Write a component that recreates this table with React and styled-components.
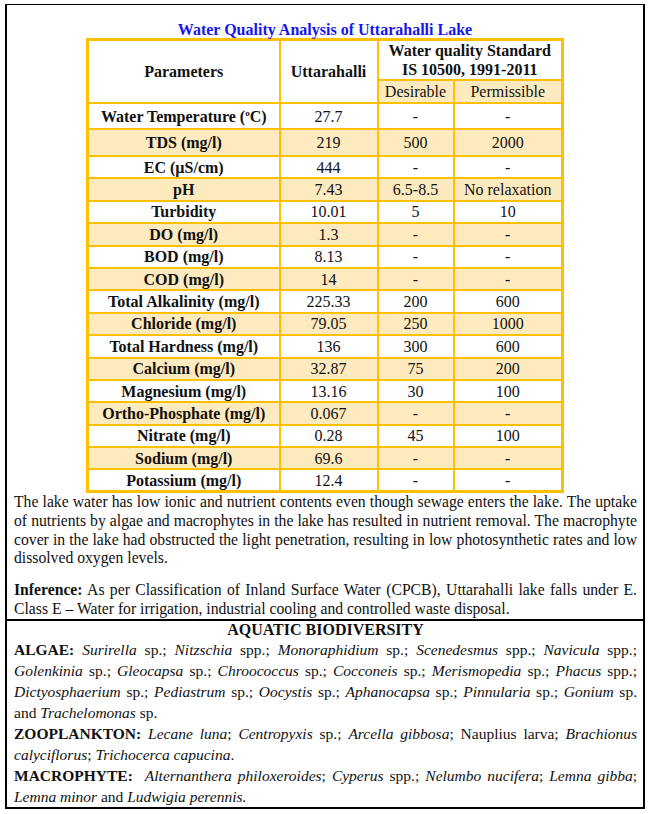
import React from "react";
import styled, { createGlobalStyle } from "styled-components";

const Global = createGlobalStyle`
  html, body { margin: 0; padding: 0; background: #fff; }
  body { font-family: "Liberation Serif", "Times New Roman", serif; color: #111; }
  table { font-family: inherit; }
`;

const Frame = styled.div`
  font-family: "Liberation Serif", "Times New Roman", serif;
  margin: 4px 0 0 5px;
  width: 640px;
  box-sizing: border-box;
  border: 2px solid #000;
  border-top-width: 1.5px;
`;

const Section = styled.section`
  padding: ${(p) => p.$pad || "0 6px 0 7px"};
  border-top: ${(p) => (p.$divided ? "2px solid #000" : "none")};
`;

const Title = styled.h1`
  margin: 0;
  padding-top: 16px;
  height: 17px;
  line-height: 17px;
  font-size: 16px;
  font-weight: bold;
  color: #1616f2;
  text-align: center;
`;

const Table = styled.table`
  margin: 0 auto;
  width: 475px;
  border-collapse: collapse;
  border: 3px solid #ffc000;
  font-size: 16px;
  table-layout: fixed;
`;

const Row = styled.tr`
  height: ${(p) => p.$h || 22.4}px;
  background: ${(p) => (p.$shade ? "#fdeabf" : "#fff")};
`;

const Cell = styled.td`
  border: 2px solid #ffc000;
  padding: 0 2px;
  text-align: center;
  vertical-align: middle;
  line-height: 19px;
  font-size: 16px;
  white-space: nowrap;
  font-weight: ${(p) => (p.$bold ? "bold" : "normal")};
  background: ${(p) => (p.$shade ? "#fdeabf" : "inherit")};
`;

const Para = styled.p`
  margin: 0;
  font-size: 15.7px;
  line-height: 18.7px;
  text-align: justify;
  padding-top: ${(p) => p.$top || 0}px;
`;

const Heading = styled.h2`
  margin: 0;
  font-size: 16px;
  line-height: 18px;
  font-weight: bold;
  text-align: center;
`;

const BioPara = styled.p`
  margin: 0;
  font-size: 15.5px;
  line-height: 21.1px;
  text-align: justify;
`;

const Label = styled.b``;
const Sp = styled.i``;

const rows = [
  ["Water Temperature (°C)", "27.7", "-", "-", 26],
  ["TDS (mg/l)", "219", "500", "2000", 27],
  ["EC (µS/cm)", "444", "-", "-"],
  ["pH", "7.43", "6.5-8.5", "No relaxation"],
  ["Turbidity", "10.01", "5", "10"],
  ["DO (mg/l)", "1.3", "-", "-"],
  ["BOD (mg/l)", "8.13", "-", "-"],
  ["COD (mg/l)", "14", "-", "-"],
  ["Total Alkalinity (mg/l)", "225.33", "200", "600"],
  ["Chloride (mg/l)", "79.05", "250", "1000"],
  ["Total Hardness (mg/l)", "136", "300", "600"],
  ["Calcium (mg/l)", "32.87", "75", "200"],
  ["Magnesium (mg/l)", "13.16", "30", "100"],
  ["Ortho-Phosphate (mg/l)", "0.067", "-", "-"],
  ["Nitrate (mg/l)", "0.28", "45", "100"],
  ["Sodium (mg/l)", "69.6", "-", "-"],
  ["Potassium (mg/l)", "12.4", "-", "-"],
];

const Sup = styled.sup`
  font-size: 9px;
  line-height: 0;
`;

const Col = styled.col`
  width: ${(p) => p.$w}px;
`;

function ParamName({ text }) {
  if (text.startsWith("Water Temperature")) {
    return (
      <>
        Water Temperature (<Sup>o</Sup>C)
      </>
    );
  }
  return text;
}

export default function App() {
  return (
    <>
      <Global />
      <Frame>
        <Section $pad="0">
          <Title>Water Quality Analysis of Uttarahalli Lake</Title>
          <Table>
            <colgroup>
              <Col $w={192} />
              <Col $w={98} />
              <Col $w={76} />
              <Col $w={109} />
            </colgroup>
            <tbody>
              <Row $h={39}>
                <Cell $bold rowSpan={2}>Parameters</Cell>
                <Cell $bold rowSpan={2}>Uttarahalli</Cell>
                <Cell $bold colSpan={2}>
                  Water quality Standard
                  <br />
                  IS 10500, 1991-2011
                </Cell>
              </Row>
              <Row $h={23}>
                <Cell $shade>Desirable</Cell>
                <Cell $shade>Permissible</Cell>
              </Row>
              {rows.map(([p, u, d, m, h], i) => (
                <Row key={p} $h={h} $shade={i % 2 === 1}>
                  <Cell $bold>
                    <ParamName text={p} />
                  </Cell>
                  <Cell>{u}</Cell>
                  <Cell>{d}</Cell>
                  <Cell>{m}</Cell>
                </Row>
              ))}
            </tbody>
          </Table>
        </Section>
        <Section>
          <Para>
            The lake water has low ionic and nutrient contents even though sewage enters the lake. The uptake
            of nutrients by algae and macrophytes in the lake has resulted in nutrient removal. The macrophyte
            cover in the lake had obstructed the light penetration, resulting in low photosynthetic rates and low
            dissolved oxygen levels.
          </Para>
          <Para $top={13}>
            <Label>Inference:</Label> As per Classification of Inland Surface Water (CPCB), Uttarahalli lake falls under E.
            Class E – Water for irrigation, industrial cooling and controlled waste disposal.
          </Para>
        </Section>
        <Section $divided $pad="0 6px 0 7px">
          <Heading>AQUATIC BIODIVERSITY</Heading>
          <BioPara>
            <Label>ALGAE:</Label> <Sp>Surirella</Sp> sp.; <Sp>Nitzschia</Sp> spp.; <Sp>Monoraphidium</Sp> sp.;{" "}
            <Sp>Scenedesmus</Sp> spp.; <Sp>Navicula</Sp> spp.; <Sp>Golenkinia</Sp> sp.; <Sp>Gleocapsa</Sp> sp.;{" "}
            <Sp>Chroococcus</Sp> sp.; <Sp>Cocconeis</Sp> sp.; <Sp>Merismopedia</Sp> sp.; <Sp>Phacus</Sp> spp.;{" "}
            <Sp>Dictyosphaerium</Sp> sp.; <Sp>Pediastrum</Sp> sp.; <Sp>Oocystis</Sp> sp.; <Sp>Aphanocapsa</Sp> sp.;{" "}
            <Sp>Pinnularia</Sp> sp.; <Sp>Gonium</Sp> sp. and <Sp>Trachelomonas</Sp> sp.
          </BioPara>
          <BioPara>
            <Label>ZOOPLANKTON:</Label> <Sp>Lecane luna</Sp>; <Sp>Centropyxis</Sp> sp.; <Sp>Arcella gibbosa</Sp>;
            Nauplius larva; <Sp>Brachionus calyciflorus</Sp>; <Sp>Trichocerca capucina</Sp>.
          </BioPara>
          <BioPara>
            <Label>MACROPHYTE:</Label>&nbsp; <Sp>Alternanthera philoxeroides</Sp>; <Sp>Cyperus</Sp> spp.;{" "}
            <Sp>Nelumbo nucifera</Sp>; <Sp>Lemna gibba</Sp>; <Sp>Lemna minor</Sp> and <Sp>Ludwigia perennis.</Sp>
          </BioPara>
        </Section>
      </Frame>
    </>
  );
}
